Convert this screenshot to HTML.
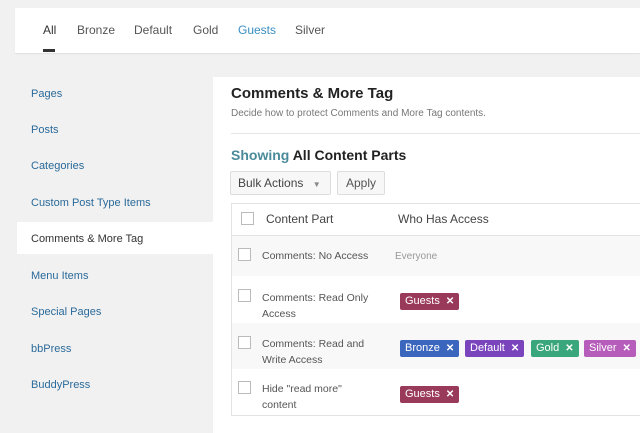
<!DOCTYPE html>
<html><head><style>
*{margin:0;padding:0;box-sizing:border-box}
body{width:640px;height:433px;background:#f1f1f1;font-family:"Liberation Sans",sans-serif;position:relative;overflow:hidden;font-size:11px;color:#444}
.abs{position:absolute}
.top{left:15px;top:8px;width:625px;height:45px;background:#fff;box-shadow:0 1px 1px rgba(0,0,0,.08)}
.tab{top:23px;font-size:12px;color:#555}
.nav{left:31px;font-size:11px;color:#2a6a9a}
.panel{left:213px;top:77px;width:427px;height:356px;background:#fff}
.cb{width:13px;height:13px;border:1px solid #bbb;background:#fff}
.tag{height:17px;color:#fff;font-size:11px;line-height:17px;padding:0 5px;border-radius:2px;white-space:nowrap}
.tag b{font-weight:bold;margin-left:6px;font-size:10px}
.rt{font-size:10.5px;color:#555;line-height:16px}
</style></head><body>
<div class="abs top"></div>
<div class="abs tab" style="left:43px;color:#333">All</div>
<div class="abs tab" style="left:77px">Bronze</div>
<div class="abs tab" style="left:134px">Default</div>
<div class="abs tab" style="left:193px">Gold</div>
<div class="abs tab" style="left:238px;color:#3a8fc0">Guests</div>
<div class="abs tab" style="left:295px">Silver</div>
<div class="abs" style="left:43px;top:49px;width:12px;height:3px;background:#333"></div>

<div class="abs nav" style="top:88px">Pages</div>
<div class="abs nav" style="top:124px">Posts</div>
<div class="abs nav" style="top:160px">Categories</div>
<div class="abs nav" style="top:197px">Custom Post Type Items</div>
<div class="abs" style="left:17px;top:222px;width:196px;height:32px;background:#fff"></div>
<div class="abs nav" style="top:233px;color:#333">Comments &amp; More Tag</div>
<div class="abs nav" style="top:270px">Menu Items</div>
<div class="abs nav" style="top:306px">Special Pages</div>
<div class="abs nav" style="top:343px">bbPress</div>
<div class="abs nav" style="top:379px">BuddyPress</div>

<div class="abs panel"></div>
<div class="abs" style="left:231px;top:85px;font-size:15px;font-weight:bold;color:#222">Comments &amp; More Tag</div>
<div class="abs" style="left:231px;top:108px;font-size:10px;color:#777">Decide how to protect Comments and More Tag contents.</div>
<div class="abs" style="left:231px;top:133px;width:409px;height:1px;background:#e5e5e5"></div>
<div class="abs" style="left:231px;top:147px;font-size:14px;font-weight:bold;color:#222"><span style="color:#4a8a9a">Showing</span> All Content Parts</div>
<div class="abs" style="left:230px;top:171px;width:101px;height:24px;border:1px solid #ddd;border-radius:2px;background:#f7f7f7;font-size:12px;padding:4px 7px;color:#444">Bulk Actions <span style="font-size:8px;color:#888;margin-left:6px">▼</span></div>
<div class="abs" style="left:337px;top:171px;width:48px;height:24px;border:1px solid #ddd;border-radius:2px;background:#f7f7f7;font-size:12px;padding:4px 8px;color:#555">Apply</div>

<div class="abs" style="left:231px;top:203px;width:412px;height:213px;border:1px solid #e3e3e3"></div>
<div class="abs" style="left:232px;top:235px;width:408px;height:1px;background:#e3e3e3"></div>
<div class="abs" style="left:232px;top:236px;width:408px;height:40px;background:#f8f8f8"></div>
<div class="abs" style="left:232px;top:323px;width:408px;height:46px;background:#f8f8f8"></div>
<div class="abs cb" style="left:241px;top:212px"></div>
<div class="abs" style="left:266px;top:212px;font-size:12px;color:#444">Content Part</div>
<div class="abs" style="left:398px;top:212px;font-size:12px;color:#444">Who Has Access</div>

<div class="abs cb" style="left:238px;top:248px"></div>
<div class="abs rt" style="left:262px;top:248px">Comments: No Access</div>
<div class="abs" style="left:395px;top:251px;font-size:10px;color:#999">Everyone</div>

<div class="abs cb" style="left:238px;top:289px"></div>
<div class="abs rt" style="left:262px;top:290px">Comments: Read Only<br>Access</div>
<div class="abs tag" style="left:400px;top:293px;background:#9a3a5a">Guests<b>✕</b></div>

<div class="abs cb" style="left:238px;top:336px"></div>
<div class="abs rt" style="left:262px;top:336px">Comments: Read and<br>Write Access</div>
<div class="abs tag" style="left:400px;top:340px;background:#3a66bd">Bronze<b>✕</b></div>
<div class="abs tag" style="left:465px;top:340px;background:#7a44bd">Default<b>✕</b></div>
<div class="abs tag" style="left:531px;top:340px;background:#3aa67b">Gold<b>✕</b></div>
<div class="abs tag" style="left:584px;top:340px;background:#b65cba">Silver<b>✕</b></div>

<div class="abs cb" style="left:238px;top:381px"></div>
<div class="abs rt" style="left:262px;top:381px">Hide "read more"<br>content</div>
<div class="abs tag" style="left:400px;top:386px;background:#9a3a5a">Guests<b>✕</b></div>
</body></html>
